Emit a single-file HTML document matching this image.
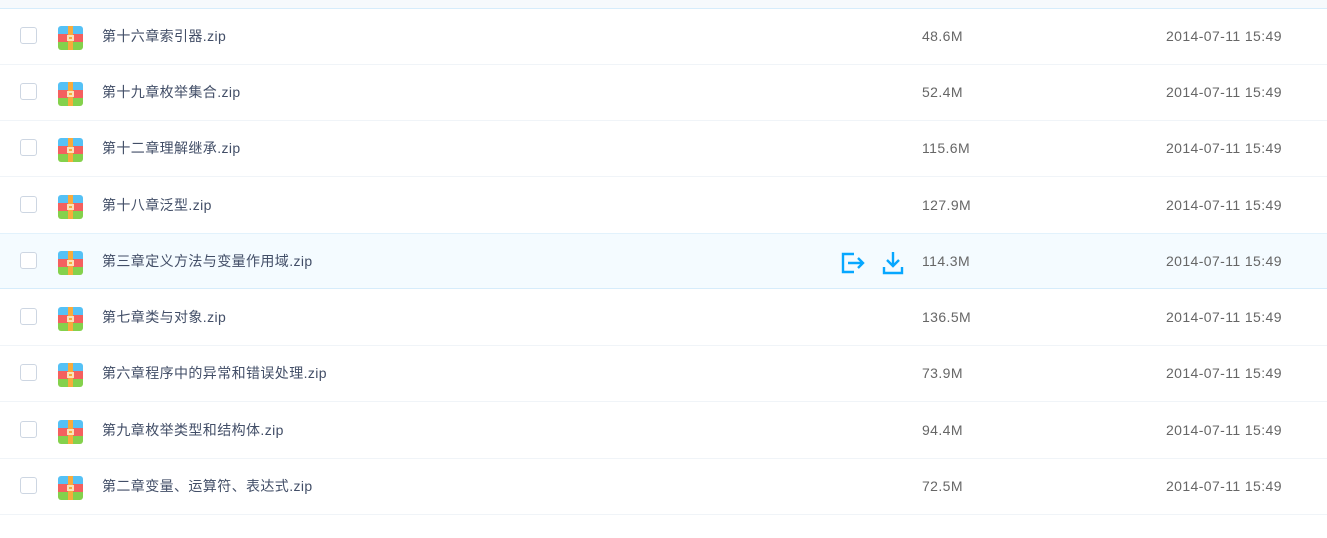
<!DOCTYPE html><html><head><meta charset="utf-8"><style>
body{margin:0;width:1327px;height:538px;background:#fff;font-family:"Liberation Sans","Noto Sans CJK SC",sans-serif;overflow:hidden;position:relative}
.top{position:absolute;left:0;top:0;width:1327px;height:8px;background:#f6f9fc;border-bottom:1px solid #d6ecfb}
.row{position:absolute;left:0;width:1327px;height:56px;border-bottom:1px solid #f0f4f8;box-sizing:border-box}
.row.h{background:#f4fbff;border-top:1px solid #e2f2fc;border-bottom:1px solid #d6ecfb}
.cb{position:absolute;left:20px;top:18px;width:15px;height:15px;border:1.5px solid #cdd6e2;border-radius:3px;background:#fff}
.ic{position:absolute;left:58px;top:17px;width:25px;height:24px;border-radius:3px;overflow:hidden}
.n{position:absolute;left:102px;top:18px;font-size:14px;color:#424e67;line-height:18px;letter-spacing:.4px}
.s{position:absolute;left:922px;top:18px;font-size:14px;color:#666;line-height:18px;letter-spacing:.4px}
.d{position:absolute;left:1166px;top:18px;font-size:14px;color:#666;line-height:18px;letter-spacing:.4px}
</style></head><body>
<div class="top"></div>
<svg width="0" height="0" style="position:absolute"><defs><g id="z"><rect x="0" y="0" width="25" height="8" fill="#55c1f5"/><rect x="0" y="8" width="25" height="8" fill="#f4605f"/><rect x="0" y="16" width="25" height="8" fill="#84d14c"/><rect x="10" y="0" width="5" height="24" fill="#f8ab3c"/><rect x="9" y="9" width="7" height="6" fill="#fbe3b8"/><rect x="11" y="11" width="3" height="2" fill="#f8ab3c"/></g></defs></svg>
<div class="row" style="top:9px"><div class="cb"></div><svg class="ic"><use href="#z"/></svg><div class="n">第十六章索引器.zip</div><div class="s">48.6M</div><div class="d">2014-07-11 15:49</div></div>
<div class="row" style="top:65px"><div class="cb"></div><svg class="ic"><use href="#z"/></svg><div class="n">第十九章枚举集合.zip</div><div class="s">52.4M</div><div class="d">2014-07-11 15:49</div></div>
<div class="row" style="top:121px"><div class="cb"></div><svg class="ic"><use href="#z"/></svg><div class="n">第十二章理解继承.zip</div><div class="s">115.6M</div><div class="d">2014-07-11 15:49</div></div>
<div class="row" style="top:178px"><div class="cb"></div><svg class="ic"><use href="#z"/></svg><div class="n">第十八章泛型.zip</div><div class="s">127.9M</div><div class="d">2014-07-11 15:49</div></div>
<div class="row h" style="top:233px"><div class="cb"></div><svg class="ic"><use href="#z"/></svg><div class="n">第三章定义方法与变量作用域.zip</div>
<svg style="position:absolute;left:840px;top:18px" width="26" height="22" viewBox="0 0 26 22" fill="none" stroke="#06a7ff" stroke-width="2.4"><path d="M14 2H3v18h11"/><path d="M8 11h15M18 6l5 5-5 5"/></svg>
<svg style="position:absolute;left:882px;top:17px" width="22" height="24" viewBox="0 0 22 24" fill="none" stroke="#06a7ff" stroke-width="2.4"><path d="M11 1v14M5 9l6 6 6-6"/><path d="M2 16v6h18v-6"/></svg>
<div class="s">114.3M</div><div class="d">2014-07-11 15:49</div></div>
<div class="row" style="top:290px"><div class="cb"></div><svg class="ic"><use href="#z"/></svg><div class="n">第七章类与对象.zip</div><div class="s">136.5M</div><div class="d">2014-07-11 15:49</div></div>
<div class="row" style="top:346px"><div class="cb"></div><svg class="ic"><use href="#z"/></svg><div class="n">第六章程序中的异常和错误处理.zip</div><div class="s">73.9M</div><div class="d">2014-07-11 15:49</div></div>
<div class="row" style="top:403px"><div class="cb"></div><svg class="ic"><use href="#z"/></svg><div class="n">第九章枚举类型和结构体.zip</div><div class="s">94.4M</div><div class="d">2014-07-11 15:49</div></div>
<div class="row" style="top:459px"><div class="cb"></div><svg class="ic"><use href="#z"/></svg><div class="n">第二章变量、运算符、表达式.zip</div><div class="s">72.5M</div><div class="d">2014-07-11 15:49</div></div>
</body></html>
